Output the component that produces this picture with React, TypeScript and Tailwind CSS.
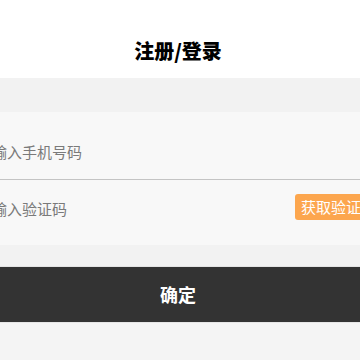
const font = { fontFamily: '"Noto Sans CJK SC", "Noto Sans", sans-serif' };

export default function App() {
  return (
    <div className="w-[360px] h-[360px] overflow-hidden bg-[#f4f4f4]" style={font}>
      {/* header */}
      <div className="h-[78px] bg-white flex justify-center pt-[37px] pr-[4px]">
        <h1 className="text-[20px] leading-[28px] font-black text-black">注册/登录</h1>
      </div>
      <div className="h-[34px] bg-[#f2f2f2]" />

      {/* form */}
      <div className="bg-[#f8f8f8]">
        <div className="h-[67px] flex items-start pt-[29px] overflow-hidden">
          <span className="-ml-[23px] text-[15px] leading-[22px] text-[#7a7a7a] whitespace-nowrap">
            请输入手机号码
          </span>
        </div>
        <div className="h-px bg-[#c4c4c4]" />
        <div className="h-[65px] flex items-start pt-[14px] overflow-hidden">
          <span className="-ml-[23px] w-[318px] shrink-0 mt-[4px] text-[15px] leading-[22px] text-[#7a7a7a] whitespace-nowrap">
            请输入验证码
          </span>
          <button className="shrink-0 h-[26px] px-[6px] rounded-[3px] bg-[#fca64e] text-white text-[15px] leading-[26px] whitespace-nowrap">
            获取验证码
          </button>
        </div>
      </div>

      <div className="h-[21px] bg-[#f2f2f2]" />
      <div className="h-px bg-[#e4e4e4]" />
      <button className="w-full h-[55px] bg-[#333333] flex items-center justify-center pr-[4px]">
        <span className="text-white text-[18px] font-bold">确定</span>
      </button>
      <div className="h-px bg-[#e6e6e6]" />
    </div>
  );
}
